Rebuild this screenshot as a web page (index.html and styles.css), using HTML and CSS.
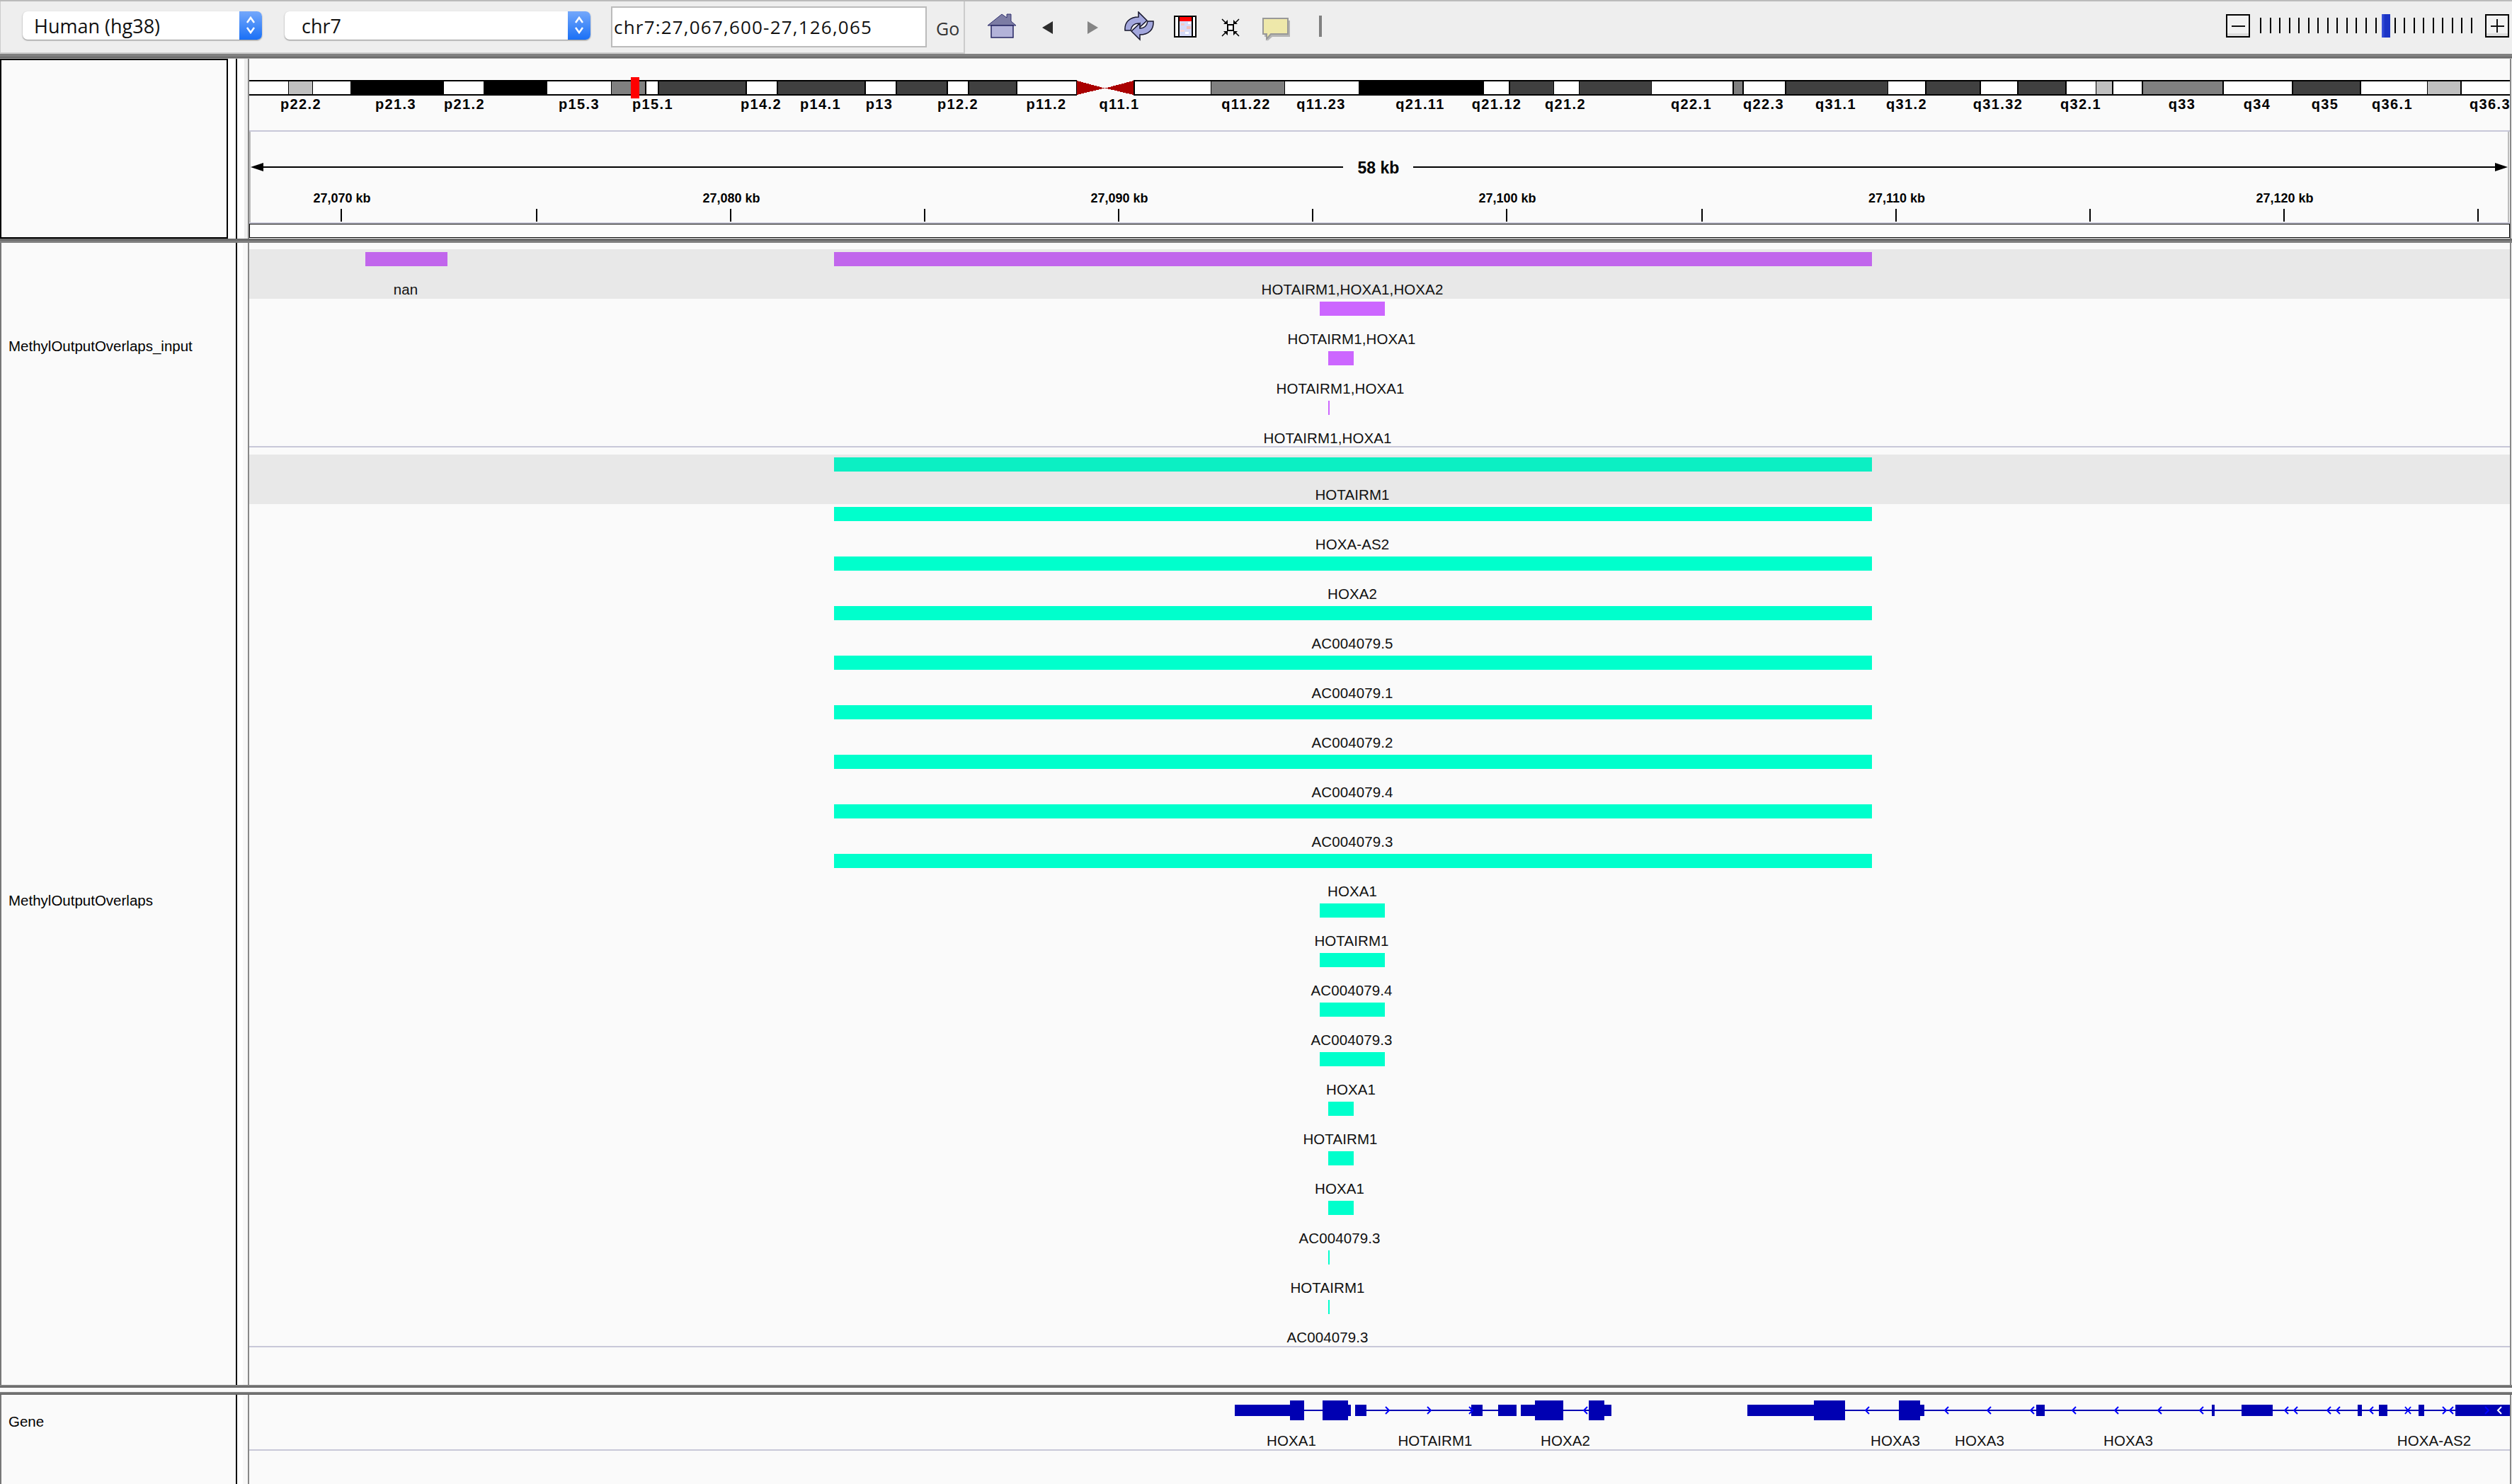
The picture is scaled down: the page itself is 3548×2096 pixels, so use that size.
FILE: index.html
```html
<!DOCTYPE html>
<html lang="en">
<head>
    <meta charset="UTF-8">
    <title>IGV</title>
    <link rel="stylesheet" href="styles.css">
</head>
<body>

<!-- toolbar -->
<div class="toolbar">
    <div class="locus">
        <div class="combo combo_genome">
            <span>Human (hg38)</span>
            <span class="stepper"><svg width="32" height="40" viewBox="0 0 32 40"><path d="M11 16l5-7 5 7M11 23l5 7 5-7"/></svg></span>
        </div>
        <div class="combo combo_chr">
            <span>chr7</span>
            <span class="stepper"><svg width="32" height="40" viewBox="0 0 32 40"><path d="M11 16l5-7 5 7M11 23l5 7 5-7"/></svg></span>
        </div>
        <div class="search">chr7:27,067,600-27,126,065</div>
        <div class="go">Go</div>
    </div>
    <div class="tools">
        <div class="tool"><svg width="48" height="44" viewBox="0 0 48 44">
            <path class="home_halo" d="M3 20L24 3l6 4V3h8v11l7 6H41v18H8V20z"/>
            <path class="home_roof" d="M4 20L24 4l7 5V4h6v10l7 6z"/>
            <rect class="home_body" x="9" y="20" width="31" height="17"/>
        </svg></div>
        <div class="tool"><svg width="48" height="44" viewBox="0 0 48 44"><path class="nav_back" d="M16 23L31 14v18z"/></svg></div>
        <div class="tool"><svg width="48" height="44" viewBox="0 0 48 44"><path class="nav_fwd" d="M31 23L16 14v18z"/></svg></div>
        <div class="tool"><svg width="48" height="44" viewBox="0 0 48 44">
            <path class="refresh" d="M4 27C3 15 11 8 23 8V1l12 12-12 11v-7c-6 0-10 4-11 10z"/>
            <path class="refresh" transform="rotate(180 24 20.5)" d="M4 27C3 15 11 8 23 8V1l12 12-12 11v-7c-6 0-10 4-11 10z"/>
        </svg></div>
        <div class="tool"><svg width="48" height="44" viewBox="0 0 48 44" shape-rendering="crispEdges">
            <rect x="8" y="6" width="32" height="31" fill="#000"/>
            <rect x="10" y="8" width="28" height="27" fill="#fff"/>
            <rect x="14" y="8" width="20" height="27" fill="#d5daf8"/>
            <rect x="14" y="8" width="2" height="27" fill="#000"/>
            <rect x="33" y="8" width="2" height="27" fill="#000"/>
            <rect x="16" y="8" width="17" height="6" fill="#f00"/>
            <rect x="18" y="17" width="5" height="3" fill="#f6c9c4"/>
            <rect x="26" y="21" width="6" height="4" fill="#f3bdb8"/>
            <rect x="17" y="26" width="6" height="3" fill="#f6d5d5"/>
            <rect x="24" y="29" width="5" height="3" fill="#fff"/>
            <rect x="28" y="15" width="4" height="3" fill="#fff"/>
        </svg></div>
        <div class="tool"><svg width="48" height="44" viewBox="0 0 48 44">
            <rect class="fit_box" x="20" y="19" width="8" height="8"/>
            <path class="fit_arrow" d="M12 11l6 6M36 11l-6 6M12 35l6-6M36 35l-6-6"/>
            <path class="fit_head" d="M20 18h-6l6-6zM28 18h6l-6-6zM20 28h-6l6 6zM28 28h6l-6 6z"/>
        </svg></div>
        <div class="tool"><svg width="48" height="44" viewBox="0 0 48 44">
            <path class="bubble_shadow" d="M7 13h36v23H18l-7 6v-6H7z"/>
            <path class="bubble" d="M5 10h35v22H16l-6 7v-7H5z"/>
        </svg></div>
        <div class="tool"><svg width="48" height="44" viewBox="0 0 48 44"><rect x="20" y="6" width="4" height="30" fill="#808080"/></svg></div>
    </div>
    <div class="zoom">
        <div class="zoom_btn"><svg width="30" height="29" viewBox="0 0 30 29"><path d="M6 15h19"/></svg></div>
        <div class="ticks">
            <i></i><i></i><i></i><i></i><i></i><i></i><i></i><i></i><i></i><i></i><i></i><i></i>
            <i></i><i></i><i></i><i></i><i></i><i></i><i></i><i></i><i></i><i></i><i></i>
            <b class="handle"></b>
        </div>
        <div class="zoom_btn"><svg width="30" height="29" viewBox="0 0 30 29"><path d="M6 15h19M15 5v19"/></svg></div>
    </div>
</div>

<div class="split split_top"></div>

<!-- ideogram + ruler -->
<div class="panel panel_head">
    <div class="names names_head"><div class="head_box"></div></div>
    <div class="rule"></div>
    <div class="gutter gutter_head"></div>
    <div class="view">
        <svg class="canvas" width="3193" height="254" viewBox="352 83 3193 254">
            <g shape-rendering="crispEdges">
                <rect class="ink" x="352" y="113" width="1169" height="22"/>
                <rect class="ink" x="1601" y="113" width="1944" height="22"/>
                <rect class="b_w" x="352" y="115" width="55" height="18"/>
                <rect class="b_l" x="408" y="115" width="33" height="18"/>
                <rect class="b_w" x="442" y="115" width="53" height="18"/>
                <rect class="b_w" x="627" y="115" width="56" height="18"/>
                <rect class="b_w" x="773" y="115" width="90" height="18"/>
                <rect class="b_m" x="864" y="115" width="47" height="18"/>
                <rect class="b_w" x="913" y="115" width="16" height="18"/>
                <rect class="b_d" x="931" y="115" width="122" height="18"/>
                <rect class="b_w" x="1055" y="115" width="42" height="18"/>
                <rect class="b_d" x="1099" y="115" width="122" height="18"/>
                <rect class="b_w" x="1223" y="115" width="42" height="18"/>
                <rect class="b_d" x="1267" y="115" width="70" height="18"/>
                <rect class="b_w" x="1339" y="115" width="28" height="18"/>
                <rect class="b_d" x="1369" y="115" width="66" height="18"/>
                <rect class="b_w" x="1437" y="115" width="83" height="18"/>
                <path class="centro" d="M1521 114L1560 124.5 1521 134z"/>
                <path class="centro" d="M1601 114L1561 124.5 1601 134z"/>
                <rect class="b_w" x="1603" y="115" width="107" height="18"/>
                <rect class="b_m" x="1711" y="115" width="103" height="18"/>
                <rect class="b_w" x="1815" y="115" width="104" height="18"/>
                <rect class="b_w" x="2096" y="115" width="35" height="18"/>
                <rect class="b_d" x="2133" y="115" width="61" height="18"/>
                <rect class="b_w" x="2195" y="115" width="35" height="18"/>
                <rect class="b_d" x="2231" y="115" width="101" height="18"/>
                <rect class="b_w" x="2333" y="115" width="114" height="18"/>
                <rect class="b_m" x="2449" y="115" width="12" height="18"/>
                <rect class="b_w" x="2463" y="115" width="58" height="18"/>
                <rect class="b_d" x="2523" y="115" width="143" height="18"/>
                <rect class="b_w" x="2667" y="115" width="52" height="18"/>
                <rect class="b_d" x="2721" y="115" width="75" height="18"/>
                <rect class="b_w" x="2798" y="115" width="51" height="18"/>
                <rect class="b_d" x="2851" y="115" width="66" height="18"/>
                <rect class="b_w" x="2919" y="115" width="41" height="18"/>
                <rect class="b_l" x="2961" y="115" width="22" height="18"/>
                <rect class="b_w" x="2985" y="115" width="40" height="18"/>
                <rect class="b_m" x="3027" y="115" width="112" height="18"/>
                <rect class="b_w" x="3141" y="115" width="96" height="18"/>
                <rect class="b_d" x="3239" y="115" width="94" height="18"/>
                <rect class="b_w" x="3335" y="115" width="93" height="18"/>
                <rect class="b_l" x="3429" y="115" width="46" height="18"/>
                <rect class="b_w" x="3477" y="115" width="68" height="18"/>
                <rect class="here" x="891" y="109" width="12" height="30"/>
            </g>
            <g class="cyto">
                <text x="425" y="154">p22.2</text><text x="559" y="154">p21.3</text><text x="656" y="154">p21.2</text>
                <text x="818" y="154">p15.3</text><text x="922" y="154">p15.1</text><text x="1075" y="154">p14.2</text>
                <text x="1159" y="154">p14.1</text><text x="1242" y="154">p13</text><text x="1353" y="154">p12.2</text>
                <text x="1478" y="154">p11.2</text><text x="1581" y="154">q11.1</text><text x="1760" y="154">q11.22</text>
                <text x="1866" y="154">q11.23</text><text x="2006" y="154">q21.11</text><text x="2114" y="154">q21.12</text>
                <text x="2211" y="154">q21.2</text><text x="2389" y="154">q22.1</text><text x="2491" y="154">q22.3</text>
                <text x="2593" y="154">q31.1</text><text x="2693" y="154">q31.2</text><text x="2822" y="154">q31.32</text>
                <text x="2939" y="154">q32.1</text><text x="3082" y="154">q33</text><text x="3188" y="154">q34</text>
                <text x="3284" y="154">q35</text><text x="3379" y="154">q36.1</text><text x="3517" y="154">q36.3</text>
            </g>
            <g shape-rendering="crispEdges">
                <rect class="sep" x="352" y="184" width="3193" height="2"/>
                <rect class="edge" x="352" y="186" width="2" height="128"/>
                <rect class="edge" x="3542" y="186" width="2" height="128"/>
                <rect class="ink" x="372" y="235" width="1525" height="2"/>
                <rect class="ink" x="1996" y="235" width="1528" height="2"/>
            </g>
            <path class="ink" d="M354 236L372 230v12z"/>
            <path class="ink" d="M3542 236L3524 230v12z"/>
            <text class="span" x="1947" y="245">58 kb</text>
            <g class="ruler">
                <text x="483" y="286">27,070 kb</text><text x="1033" y="286">27,080 kb</text><text x="1581" y="286">27,090 kb</text>
                <text x="2129" y="286">27,100 kb</text><text x="2679" y="286">27,110 kb</text><text x="3227" y="286">27,120 kb</text>
            </g>
            <g class="ink" shape-rendering="crispEdges">
                <rect x="481" y="295" width="2" height="18"/><rect x="757" y="295" width="2" height="18"/>
                <rect x="1031" y="295" width="2" height="18"/><rect x="1305" y="295" width="2" height="18"/>
                <rect x="1579" y="295" width="2" height="18"/><rect x="1853" y="295" width="2" height="18"/>
                <rect x="2127" y="295" width="2" height="18"/><rect x="2403" y="295" width="2" height="18"/>
                <rect x="2677" y="295" width="2" height="18"/><rect x="2951" y="295" width="2" height="18"/>
                <rect x="3225" y="295" width="2" height="18"/><rect x="3499" y="295" width="2" height="18"/>
            </g>
            <g shape-rendering="crispEdges">
                <rect class="sep" x="352" y="314" width="3193" height="2"/>
                <rect class="ink" x="352" y="316" width="3193" height="20"/>
                <rect class="inner" x="353" y="317" width="3191" height="18"/>
            </g>
        </svg>
    </div>
</div>

<div class="split split_mid"></div>

<!-- feature tracks -->
<div class="panel panel_tracks">
    <div class="names">
        <div class="name name_input">MethylOutputOverlaps_input</div>
        <div class="name name_out">MethylOutputOverlaps</div>
    </div>
    <div class="rule"></div>
    <div class="gutter"></div>
    <div class="view">
        <svg class="canvas" width="3193" height="1613" viewBox="352 343 3193 1613">
            <g shape-rendering="crispEdges">
                <rect class="stripe" x="352" y="352" width="3193" height="70"/>
                <rect class="stripe" x="352" y="642" width="3193" height="70"/>
                <rect class="sep" x="352" y="630" width="3193" height="2"/>
                <rect class="sep" x="352" y="1901" width="3193" height="2"/>

                <rect class="pur_g" x="516" y="356" width="116" height="20"/>
                <rect class="pur_g" x="1178" y="356" width="1466" height="20"/>
                <rect class="pur" x="1864" y="426" width="92" height="20"/>
                <rect class="pur" x="1876" y="496" width="36" height="20"/>
                <rect class="pur" x="1876" y="566" width="2" height="20"/>

                <rect class="teal_g" x="1178" y="646" width="1466" height="20"/>
                <rect class="teal" x="1178" y="716" width="1466" height="20"/>
                <rect class="teal" x="1178" y="786" width="1466" height="20"/>
                <rect class="teal" x="1178" y="856" width="1466" height="20"/>
                <rect class="teal" x="1178" y="926" width="1466" height="20"/>
                <rect class="teal" x="1178" y="996" width="1466" height="20"/>
                <rect class="teal" x="1178" y="1066" width="1466" height="20"/>
                <rect class="teal" x="1178" y="1136" width="1466" height="20"/>
                <rect class="teal" x="1178" y="1206" width="1466" height="20"/>
                <rect class="teal" x="1864" y="1276" width="92" height="20"/>
                <rect class="teal" x="1864" y="1346" width="92" height="20"/>
                <rect class="teal" x="1864" y="1416" width="92" height="20"/>
                <rect class="teal" x="1864" y="1486" width="92" height="20"/>
                <rect class="teal" x="1876" y="1556" width="36" height="20"/>
                <rect class="teal" x="1876" y="1626" width="36" height="20"/>
                <rect class="teal" x="1876" y="1696" width="36" height="20"/>
                <rect class="teal" x="1876" y="1766" width="2" height="20"/>
                <rect class="teal" x="1876" y="1836" width="2" height="20"/>
            </g>
            <g class="feat">
                <text x="573" y="416">nan</text>
                <text x="1910" y="416">HOTAIRM1,HOXA1,HOXA2</text>
                <text x="1909" y="486">HOTAIRM1,HOXA1</text>
                <text x="1893" y="556">HOTAIRM1,HOXA1</text>
                <text x="1875" y="626">HOTAIRM1,HOXA1</text>

                <text x="1910" y="706">HOTAIRM1</text>
                <text x="1910" y="776">HOXA-AS2</text>
                <text x="1910" y="846">HOXA2</text>
                <text x="1910" y="916">AC004079.5</text>
                <text x="1910" y="986">AC004079.1</text>
                <text x="1910" y="1056">AC004079.2</text>
                <text x="1910" y="1126">AC004079.4</text>
                <text x="1910" y="1196">AC004079.3</text>
                <text x="1910" y="1266">HOXA1</text>
                <text x="1909" y="1336">HOTAIRM1</text>
                <text x="1909" y="1406">AC004079.4</text>
                <text x="1909" y="1476">AC004079.3</text>
                <text x="1908" y="1546">HOXA1</text>
                <text x="1893" y="1616">HOTAIRM1</text>
                <text x="1892" y="1686">HOXA1</text>
                <text x="1892" y="1756">AC004079.3</text>
                <text x="1875" y="1826">HOTAIRM1</text>
                <text x="1875" y="1896">AC004079.3</text>
            </g>
        </svg>
    </div>
</div>

<div class="split split_thin"></div>
<div class="gap"></div>
<div class="split split_thin"></div>

<!-- gene track -->
<div class="panel panel_gene">
    <div class="names">
        <div class="name name_gene">Gene</div>
    </div>
    <div class="rule"></div>
    <div class="gutter"></div>
    <div class="view">
        <svg class="canvas" width="3193" height="126" viewBox="352 1970 3193 126">
            <g class="exon" shape-rendering="crispEdges">
                <rect x="1842" y="1991" width="26" height="2"/>
                <rect x="1930" y="1991" width="148" height="2"/>
                <rect x="2094" y="1991" width="22" height="2"/>
                <rect x="2208" y="1991" width="36" height="2"/>
                <rect x="2606" y="1991" width="862" height="2"/>

                <rect x="1744" y="1984" width="78" height="16"/>
                <rect x="1822" y="1978" width="20" height="28"/>
                <rect x="1868" y="1978" width="36" height="28"/>
                <rect x="1904" y="1984" width="4" height="16"/>
                <rect x="1914" y="1984" width="16" height="16"/>
                <rect x="2078" y="1984" width="16" height="16"/>
                <rect x="2116" y="1984" width="26" height="16"/>
                <rect x="2148" y="1984" width="20" height="16"/>
                <rect x="2168" y="1978" width="40" height="28"/>
                <rect x="2244" y="1978" width="22" height="28"/>
                <rect x="2266" y="1984" width="10" height="16"/>

                <rect x="2468" y="1984" width="94" height="16"/>
                <rect x="2562" y="1978" width="44" height="28"/>
                <rect x="2682" y="1978" width="30" height="28"/>
                <rect x="2712" y="1984" width="6" height="16"/>
                <rect x="2876" y="1984" width="12" height="16"/>
                <rect x="3124" y="1984" width="4" height="16"/>
                <rect x="3166" y="1984" width="44" height="16"/>
                <rect x="3330" y="1984" width="6" height="16"/>
                <rect x="3360" y="1984" width="12" height="16"/>
                <rect x="3416" y="1984" width="8" height="16"/>
                <rect x="3468" y="1984" width="77" height="16"/>
            </g>
            <path class="strand" d="M1957 1987l5 5-5 5M2016 1987l5 5-5 5M2075 1987l5 5-5 5
                M2242 1987l-5 5 5 5M2640 1987l-5 5 5 5M2752 1987l-5 5 5 5M2812 1987l-5 5 5 5M2873 1987l-5 5 5 5
                M2932 1987l-5 5 5 5M2992 1987l-5 5 5 5M3053 1987l-5 5 5 5M3112 1987l-5 5 5 5
                M3232 1987l-5 5 5 5M3245 1987l-5 5 5 5M3292 1987l-5 5 5 5M3305 1987l-5 5 5 5M3352 1987l-5 5 5 5
                M3397 1987l8 10M3405 1987l-8 10M3450 1987l5 5-5 5M3465 1987l-5 5 5 5M3510 1987l5 5-5 5"/>
            <path class="strand_w" d="M3533 1987l-5 5 5 5"/>
            <g class="feat">
                <text x="1824" y="2042">HOXA1</text>
                <text x="2027" y="2042">HOTAIRM1</text>
                <text x="2211" y="2042">HOXA2</text>
                <text x="2677" y="2042">HOXA3</text>
                <text x="2796" y="2042">HOXA3</text>
                <text x="3006" y="2042">HOXA3</text>
                <text x="3438" y="2042">HOXA-AS2</text>
            </g>
            <rect class="sep" x="352" y="2047" width="3193" height="2" shape-rendering="crispEdges"/>
        </svg>
    </div>
</div>

</body>
</html>
```

FILE: styles.css
```css
*{
    box-sizing: border-box;
}
html, body{
    margin:0;
    padding:0;
}
body{
    width:3548px;
    height:2096px;
    overflow:hidden;
    background:#fafafa;
    font-family:"Liberation Sans",Arial,sans-serif;
    color:#000;
}

/* toolbar */
.toolbar{
    display:flex;
    height:76px;
    border-top:2px solid #bbb;
    background:#eee;
}
.locus{
    display:flex;
    align-items:flex-start;
    width:1363px;
    padding-left:31px;
    border-left:1px solid #ccc;
    border-right:2px solid #ccc;
    border-bottom:2px solid #ccc;
    font-family:"Open Sans",sans-serif;
    font-size:27px;
    color:#111;
}
.combo{
    display:flex;
    align-items:center;
    justify-content:space-between;
    height:40px;
    margin-top:14px;
    background:#fff;
    border-radius:7px;
    box-shadow:0 1px 2px rgba(0,0,0,.45);
    overflow:hidden;
}
.combo_genome{
    width:338px;
    padding-left:16px;
}
.combo_chr{
    width:432px;
    margin-left:32px;
    padding-left:24px;
}
.stepper{
    width:32px;
    height:40px;
    background:linear-gradient(#74a8fb,#1a70f6);
}
.stepper svg{
    display:block;
}
.stepper path{
    fill:none;
    stroke:#fff;
    stroke-width:2.5;
}
.search{
    width:446px;
    height:58px;
    margin-top:7px;
    margin-left:29px;
    padding-left:2px;
    border:2px solid #bbb;
    background:#fff;
    font-size:26px;
    letter-spacing:1.2px;
    line-height:54px;
}
.go{
    margin-top:20px;
    margin-left:13px;
    font-size:25px;
    line-height:36px;
    color:#333;
}

.tools{
    display:flex;
    padding-left:20px;
    padding-top:14px;
}
.tool{
    display:flex;
    justify-content:center;
    width:64.6px;
    height:44px;
}
.home_halo{
    fill:#fff;
}
.home_roof{
    fill:#7c7ca4;
    stroke:#2d2d6b;
    stroke-width:1;
}
.home_body{
    fill:#b3b3d9;
    stroke:#23235f;
    stroke-width:1.5;
}
.nav_back{
    fill:#2c2c2c;
}
.nav_fwd{
    fill:#858585;
}
.refresh{
    fill:#a3a7dd;
    stroke:#15152c;
    stroke-width:1.5;
}
.fit_box{
    fill:#fff;
    stroke:#000;
    stroke-width:2;
}
.fit_arrow{
    stroke:#000;
    stroke-width:1.5;
}
.fit_head{
    fill:#000;
}
.bubble{
    fill:#eee8aa;
    stroke:#999;
    stroke-width:2;
}
.bubble_shadow{
    fill:#b5b5b5;
}

.zoom{
    display:flex;
    margin-left:auto;
    padding-top:18px;
    padding-right:4px;
}
.zoom_btn{
    width:34px;
    height:33px;
    border:2px solid #000;
    background:linear-gradient(#f2f2f2 85%,#ddd 85%);
}
.zoom_btn svg{
    display:block;
}
.zoom_btn path{
    fill:none;
    stroke:#111;
    stroke-width:2;
}
.ticks{
    position:relative;
    display:flex;
    gap:11.56px;
    align-items:flex-start;
    width:332px;
    padding-top:5px;
    padding-left:14px;
}
.ticks i{
    display:block;
    width:2px;
    height:22px;
    background:#000;
}
.handle{
    position:absolute;
    top:0;
    left:186px;
    width:12px;
    height:33px;
    background:linear-gradient(90deg,#3f58de,#1b34c6 40%);
}

/* splitters between panels */
.split{
    background:#808080;
}
.split_top{
    height:7px;
    background:linear-gradient(#808080 4px,#6b6b6b 4px,#6b6b6b 6px,#aaa 6px);
}
.split_mid{
    height:6px;
    background:linear-gradient(#6b6b6b 3px,#808080 3px);
}
.split_thin{
    height:4px;
    background:linear-gradient(#808080 2px,#666 2px);
}
.gap{
    height:6px;
}

/* panels */
.panel{
    display:flex;
}
.panel_head{
    height:254px;
}
.panel_tracks{
    height:1613px;
}
.panel_gene{
    height:126px;
}
.names{
    width:333px;
    border-left:2px solid #777;
    font-size:20.5px;
    background:#fafafa;
}
.names_head{
    border-left:none;
    background:#fff;
}
.head_box{
    width:322px;
    height:100%;
    border:2px solid #000;
    background:#fafafa;
}
.name{
    display:flex;
    align-items:center;
    padding-left:10px;
}
.name_input{
    height:292px;
}
.name_out{
    height:1273px;
}
.name_gene{
    height:76px;
}
.rule{
    width:2px;
    background:#000;
}
.gutter{
    width:15px;
    background:linear-gradient(90deg,#fff 8px,#f8f8f8 8px);
}
.gutter_head{
    background:linear-gradient(90deg,#fff 10px,#eee 10px);
}
.view{
    width:3197px;
    border-left:2px solid #888;
    border-right:2px solid #888;
}
.canvas{
    display:block;
}

/* drawing colours */
.ink{
    fill:#000;
}
.b_w{
    fill:#fff;
}
.b_l{
    fill:#c0c0c0;
}
.b_m{
    fill:#808080;
}
.b_d{
    fill:#404040;
}
.centro{
    fill:#aa0000;
}
.here{
    fill:#f00;
}
.sep{
    fill:#c8c8d8;
}
.edge{
    fill:#bbb;
}
.inner{
    fill:#fcfcfc;
}
.stripe{
    fill:#e8e8e8;
}
.pur{
    fill:#cc66ff;
}
.pur_g{
    fill:#c166ec;
}
.teal{
    fill:#00ffcc;
}
.teal_g{
    fill:#0cefc3;
}
.exon{
    fill:#0000b2;
}
.strand{
    fill:none;
    stroke:#0000ff;
    stroke-width:2;
}
.strand_w{
    fill:none;
    stroke:#fff;
    stroke-width:2;
}

/* canvas text */
.cyto text{
    font-size:20px;
    font-weight:bold;
    letter-spacing:1.4px;
    text-anchor:middle;
}
.ruler text{
    font-size:18px;
    font-weight:bold;
    text-anchor:middle;
}
.span{
    font-size:23px;
    font-weight:bold;
    text-anchor:middle;
}
.feat text{
    font-size:20.5px;
    letter-spacing:.1px;
    fill:#111;
    text-anchor:middle;
}
```
